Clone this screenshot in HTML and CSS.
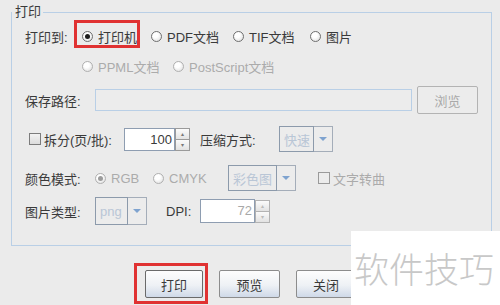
FILE: index.html
```html
<!DOCTYPE html>
<html lang="zh-CN">
<head>
    <meta charset="UTF-8">
    <meta name="viewport" content="width=device-width, initial-scale=1.0">
    <title>打印</title>
    <link rel="stylesheet" href="styles.css">
</head>
<body>
    <fieldset class="group">
        <legend>打印</legend>

        <div class="row row-target">
            <span class="label short">打印到:</span>
            <label class="opt w69 marked"><span class="radio on"></span>打印机</label>
            <label class="opt w82"><span class="radio"></span>PDF文档</label>
            <label class="opt w77"><span class="radio"></span>TIF文档</label>
            <label class="opt"><span class="radio"></span>图片</label>
        </div>

        <div class="row row-more">
            <span class="label short"></span>
            <label class="opt w91 off"><span class="radio"></span>PPML文档</label>
            <label class="opt off"><span class="radio"></span>PostScript文档</label>
        </div>

        <div class="row row-path">
            <span class="label">保存路径:</span>
            <span class="field path"></span>
            <span class="btn off browse">浏览</span>
        </div>

        <div class="row row-split">
            <label class="opt split"><span class="check"></span>拆分(页/批):</label>
            <span class="field num w51">100</span>
            <span class="spin"><i>&#9652;</i><i>&#9662;</i></span>
            <span class="label compress">压缩方式:</span>
            <span class="combo w54"><span class="combo-text">快速</span><span class="combo-arrow"></span></span>
        </div>

        <div class="row row-color">
            <span class="label">颜色模式:</span>
            <label class="opt w58 off"><span class="radio on"></span>RGB</label>
            <label class="opt w75 off"><span class="radio"></span>CMYK</label>
            <span class="combo w68"><span class="combo-text">彩色图</span><span class="combo-arrow"></span></span>
            <label class="opt off curve"><span class="check"></span>文字转曲</label>
        </div>

        <div class="row row-image">
            <span class="label">图片类型:</span>
            <span class="combo w52 tall"><span class="combo-text">png</span><span class="combo-arrow"></span></span>
            <span class="label dpi">DPI:</span>
            <span class="field num w55 dim">72</span>
            <span class="spin dim"><i>&#9652;</i><i>&#9662;</i></span>
        </div>
    </fieldset>

    <div class="actions">
        <span class="btn primary marked">打印</span>
        <span class="btn w61">预览</span>
        <span class="btn w60">关闭</span>
    </div>

    <div class="watermark">软件技巧</div>
</body>
</html>
```

FILE: styles.css
```css
body {
    margin: 0;
    width: 500px;
    height: 305px;
    overflow: hidden;
    position: relative;
    background-color: #ebebeb;
    color: #3a3a3a;
    font-family: "Liberation Sans", "Noto Sans CJK SC", sans-serif;
    font-size: 13px;
}

.group {
    margin: 4px 8px 0 11px;
    padding: 2px 0 0 13px;
    height: 242px;
    box-sizing: border-box;
    border: 1px solid #b9cfe6;
    min-width: 0;
}

.group legend {
    margin-left: -13px;
    padding: 0 2px 0 3px;
    line-height: 16px;
}

.row {
    display: flex;
    align-items: center;
    height: 28px;
}

.row-more { margin-top: 2px; }
.row-path { margin-top: 6px; }
.row-split { margin-top: 11px; }
.row-color { margin-top: 11px; }
.row-image { margin-top: 5px; }

.label {
    width: 70px;
    flex: none;
    white-space: nowrap;
}

.label.short { width: 57px; }

.opt {
    display: flex;
    align-items: center;
    flex: none;
    white-space: nowrap;
    position: relative;
}

.opt.off { color: #ababab; }

.w69 { width: 69px; }
.w82 { width: 82px; }
.w77 { width: 77px; }
.w91 { width: 91px; }
.w58 { width: 58px; }
.w75 { width: 75px; }

.radio {
    width: 11px;
    height: 11px;
    box-sizing: border-box;
    border: 1px solid #6f6f6f;
    border-radius: 50%;
    background: radial-gradient(circle at 40% 35%, #ffffff 30%, #d9d9d9 100%);
    margin-right: 5px;
    position: relative;
    flex: none;
}

.radio.on::after {
    content: "";
    position: absolute;
    left: 2px;
    top: 2px;
    width: 5px;
    height: 5px;
    border-radius: 50%;
    background: #1e1e1e;
}

.off .radio { border-color: #b0b0b0; }
.off .radio.on::after { background: #9c9c9c; }

.check {
    width: 12px;
    height: 12px;
    box-sizing: border-box;
    border: 1px solid #7c7c7c;
    background: linear-gradient(#f2f2f2, #dcdcdc);
    margin-right: 3px;
    flex: none;
}

.off .check { border-color: #9a9a9a; background: #ececec; }

.split { margin-left: 4px; width: 95px; }
.curve { margin-left: 22px; }

.field {
    box-sizing: border-box;
    border: 1px solid #b9cfe6;
    height: 22px;
    background: #ececec;
    flex: none;
}

.path { width: 317px; }

.num {
    background: #fff;
    border-color: #8e9db1;
    height: 23px;
    text-align: right;
    padding-right: 2px;
    line-height: 21px;
}

.num.dim { color: #a8a8a8; height: 24px; line-height: 22px; }

.w51 { width: 51px; }
.w55 { width: 55px; }

.spin {
    display: flex;
    flex-direction: column;
    width: 15px;
    height: 23px;
    flex: none;
}

.spin i {
    flex: 1;
    border: 1px solid #9a9a9a;
    margin-top: -1px;
    background: linear-gradient(#fbfbfb, #e2e2e2);
    font-style: normal;
    font-size: 6px;
    line-height: 10px;
    text-align: center;
    color: #777;
}

.spin i:first-child { margin-top: 0; }
.spin.dim i { color: #bbb; border-color: #b3b3b3; }

.compress { margin-left: 10px; width: 79px; }
.dpi { margin-left: 19px; width: 34px; }

.combo {
    display: flex;
    box-sizing: border-box;
    height: 26px;
    border: 1px solid #a4adb9;
    flex: none;
    background: #ececec;
}

.combo.tall { height: 28px; }

.w54 { width: 54px; }
.w68 { width: 68px; }
.w52 { width: 52px; }

.combo-text {
    flex: 1;
    border: 1px solid #8c9aab;
    margin: -1px 0 -1px -1px;
    color: #b9c6d6;
    padding-left: 4px;
    display: flex;
    align-items: center;
    white-space: nowrap;
    overflow: hidden;
}

.combo-arrow {
    width: 18px;
    flex: none;
    position: relative;
}

.combo-arrow::after {
    content: "";
    position: absolute;
    left: 5px;
    top: 50%;
    margin-top: -2px;
    border-left: 4px solid transparent;
    border-right: 4px solid transparent;
    border-top: 4px solid #7fa3cf;
}

.btn {
    display: flex;
    align-items: center;
    justify-content: center;
    box-sizing: border-box;
    height: 28px;
    border: 1px solid #8c8c8c;
    border-radius: 2px;
    background: linear-gradient(#fdfdfd 0%, #eef1f5 55%, #cfd9e8 100%);
    flex: none;
    position: relative;
}

.btn.off {
    background: #ececec;
    border-color: #b3b3b3;
    color: #a9a9a9;
}

.browse { width: 61px; margin-left: 5px; }

.actions {
    display: flex;
    gap: 16px;
    margin: 24px 0 0 145px;
}

.primary { width: 58px; border-color: #6a6a6a; }
.w61 { width: 61px; }
.w60 { width: 60px; }

.marked::before {
    content: "";
    position: absolute;
    border: 3px solid #e03232;
    pointer-events: none;
}

.opt.marked::before {
    left: -8px;
    top: -7px;
    width: 60px;
    height: 22px;
}

.btn.marked::before {
    left: -12px;
    top: -8px;
    width: 68px;
    height: 35px;
}

.watermark {
    position: absolute;
    left: 351px;
    top: 231px;
    width: 149px;
    height: 74px;
    background: #fff;
    color: #c8c8c8;
    font-family: "Noto Sans CJK SC", sans-serif;
    font-weight: 300;
    font-size: 35px;
    line-height: 74px;
    padding-left: 3px;
    box-sizing: border-box;
    white-space: nowrap;
}
```
